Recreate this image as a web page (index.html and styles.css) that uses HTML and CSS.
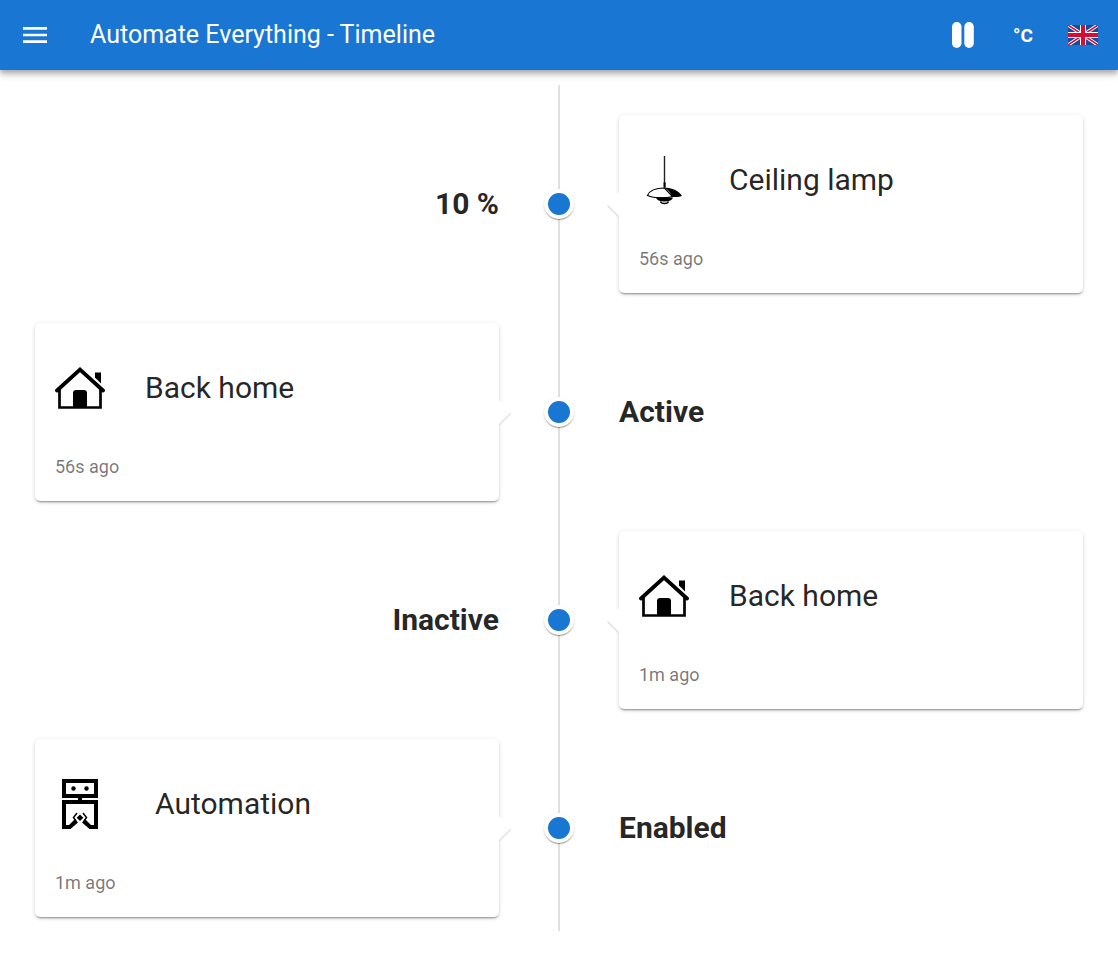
FILE: index.html
```html
<!DOCTYPE html>
<html lang="en">
<head>
<meta charset="utf-8">
<title>Automate Everything - Timeline</title>
<link rel="stylesheet" href="styles.css">
</head>
<body>
<svg class="symbols" aria-hidden="true">
  <symbol id="house" viewBox="0 0 50 50">
    <path d="M40 9.500h6v11l-6-6z"/>
    <path d="M2 27.500 25 6.500 48 27.500" fill="none" stroke="#000" stroke-width="3.800" stroke-linecap="round"/>
    <path d="M4.500 26v18.500h41V26" fill="none" stroke="#000" stroke-width="2.700"/>
    <path d="M18 45V30q0-3 3-3h8q3 0 3 3v15z"/>
  </symbol>
</svg>
<header class="app-bar">
  <button class="bar-button" aria-label="Menu">
    <svg class="menu-icon" viewBox="0 0 24 16"><path d="M0 0h24v2.700H0zM0 6.650h24v2.700H0zM0 13.300h24V16H0z" fill="#fff"/></svg>
  </button>
  <h1 class="bar-title">Automate Everything - Timeline</h1>
  <button class="bar-button" aria-label="Pause">
    <svg class="pause-icon" viewBox="0 0 22 26"><rect width="9.500" height="26" rx="4.700" fill="#fff"/><rect x="12.300" width="9.500" height="26" rx="4.700" fill="#fff"/></svg>
  </button>
  <button class="bar-button">°C</button>
  <button class="bar-button" aria-label="English">
    <svg class="flag-icon" viewBox="0 0 60 40" preserveAspectRatio="none">
      <path d="M0 0h60v40H0z" fill="#1a4a9c"/>
      <path d="m0 0 60 40M60 0 0 40" stroke="#fff" stroke-width="7"/>
      <path d="m0 0 60 40M60 0 0 40" stroke="#d80b32" stroke-width="3"/>
      <path d="M30 0v40M0 20h60" stroke="#fff" stroke-width="12"/>
      <path d="M30 0v40M0 20h60" stroke="#d80b32" stroke-width="8"/>
    </svg>
  </button>
</header>
<main class="timeline">
  <section class="entry">
    <article class="card">
      <div class="card-head">
        <svg class="card-icon" viewBox="0 0 50 50">
          <path d="M25.500 1v28" stroke="#222" stroke-width="1.400"/>
          <path d="M24.500 27.500h2.200v5h-2.200z"/>
          <path d="M8.500 40.500c2-5 9-7.500 17-7.500l8 8.500c-8 2-20 1.500-25-1z" fill="#fff" stroke="#000" stroke-width="1.200"/>
          <path d="M24.500 32.500c9 0 16 4 18.500 8.500-2 1-6 1-10 1-1-5-5-8-8.500-9.500z"/>
          <path d="M17 42.500h17q-1 4-8.500 4T17 42.500z"/>
          <path d="M21.500 46.500q.5 2 4 2t4-2" fill="none" stroke="#000" stroke-width="1.300"/>
        </svg>
        <h2 class="card-title">Ceiling lamp</h2>
      </div>
      <time class="card-time">56s ago</time>
    </article>
    <span class="dot"></span>
    <strong class="state">10 %</strong>
  </section>
  <section class="entry flipped">
    <article class="card">
      <div class="card-head">
        <svg class="card-icon"><use href="#house"/></svg>
        <h2 class="card-title">Back home</h2>
      </div>
      <time class="card-time">56s ago</time>
    </article>
    <span class="dot"></span>
    <strong class="state">Active</strong>
  </section>
  <section class="entry">
    <article class="card">
      <div class="card-head">
        <svg class="card-icon"><use href="#house"/></svg>
        <h2 class="card-title">Back home</h2>
      </div>
      <time class="card-time">1m ago</time>
    </article>
    <span class="dot"></span>
    <strong class="state">Inactive</strong>
  </section>
  <section class="entry flipped">
    <article class="card">
      <div class="card-head wide">
        <svg class="card-icon" viewBox="0 0 50 50">
          <path d="M9 2h32v15H9z" fill="none" stroke="#000" stroke-width="4"/>
          <circle cx="18.500" cy="9.500" r="2.200"/><circle cx="31.500" cy="9.500" r="2.200"/>
          <path d="M23 18h4v5h-4z"/>
          <path d="M7 21h36v29h-8.500l-7.500-6.500 3-3.500 6 6H39V25H11v21h3l6-6 3 3.500L15.500 50H7z"/>
          <path d="m25 35.500 3.300 3.300-3.300 3.300-3.300-3.300z"/>
          <path d="m22 34-3.500 4.500L21 42m7-8 3.500 4.500L29 42" fill="none" stroke="#000" stroke-width="1.500"/>
        </svg>
        <h2 class="card-title">Automation</h2>
      </div>
      <time class="card-time">1m ago</time>
    </article>
    <span class="dot"></span>
    <strong class="state">Enabled</strong>
  </section>
</main>
</body>
</html>
```
FILE: styles.css
```css
* {
  box-sizing: border-box;
}

body {
  margin: 0;
  background: #fff;
  color: rgba(0, 0, 0, 0.87);
  font-family: Roboto, sans-serif;
}

.symbols {
  position: absolute;
  width: 0;
  height: 0;
}

.app-bar {
  display: flex;
  align-items: center;
  height: 70px;
  padding: 0 5px;
  background: #1976d2;
  color: #fff;
  box-shadow: 0 2px 5px rgba(0, 0, 0, 0.2), 0 5px 6px rgba(0, 0, 0, 0.14), 0 1px 12px rgba(0, 0, 0, 0.12);
}

.bar-button {
  display: flex;
  align-items: center;
  justify-content: center;
  width: 60px;
  height: 60px;
  padding: 0;
  border: 0;
  background: none;
  color: inherit;
  font: 700 19px Roboto, sans-serif;
}

.bar-title {
  flex: 1;
  margin: 0;
  padding-left: 25px;
  font-size: 25px;
  font-weight: 400;
  line-height: 38px;
}

.menu-icon {
  width: 24px;
  height: 16px;
}

.pause-icon {
  width: 22px;
  height: 26px;
}

.flag-icon {
  width: 30px;
  height: 20px;
}

.timeline {
  display: flex;
  flex-direction: column;
  gap: 30px;
  margin-top: 15px;
  padding: 30px 35px 14px;
  background: linear-gradient(#e0e0e0, #e0e0e0) center / 2px 100% no-repeat;
}

.entry {
  display: grid;
  grid-template-columns: 1fr 120px 1fr;
  grid-template-areas: "state dot card";
  align-items: center;
}

.entry.flipped {
  grid-template-areas: "card dot state";
}

.card {
  grid-area: card;
  position: relative;
  padding: 40px 20px 20px;
  border-radius: 5px;
  background: #fff;
  box-shadow: 0 3px 1px -2px rgba(0, 0, 0, 0.2), 0 2px 2px rgba(0, 0, 0, 0.14), 0 1px 5px rgba(0, 0, 0, 0.12);
}

.card::before,
.card::after {
  content: "";
  position: absolute;
  top: 77px;
  right: 100%;
  border: 12px solid transparent;
  border-left: 0;
  border-right-color: #fff;
}

.card::before {
  top: 79px;
  border-right-color: #e0e0e0;
}

.flipped .card::before,
.flipped .card::after {
  right: auto;
  left: 100%;
  border-right: 0;
  border-left: 12px solid #fff;
}

.flipped .card::before {
  border-left-color: #e0e0e0;
}

.card-head {
  display: flex;
  gap: 40px;
}

.card-head.wide {
  gap: 50px;
}

.card-icon {
  width: 50px;
  height: 50px;
}

.card-title {
  margin: 0;
  font-size: 30px;
  font-weight: 400;
  line-height: 50px;
}

.card-time {
  display: block;
  margin-top: 40px;
  color: rgba(0, 0, 0, 0.54);
  font-size: 18px;
  line-height: 28px;
}

.dot {
  grid-area: dot;
  justify-self: center;
  width: 30px;
  height: 30px;
  border: 4px solid #fff;
  border-radius: 50%;
  background: #1976d2;
  box-shadow: 0 2px 1px -1px rgba(0, 0, 0, 0.2), 0 1px 1px rgba(0, 0, 0, 0.14), 0 1px 3px rgba(0, 0, 0, 0.12);
}

.state {
  grid-area: state;
  justify-self: end;
  font-size: 30px;
  font-weight: 700;
  line-height: 36px;
}

.flipped .state {
  justify-self: start;
}
```
